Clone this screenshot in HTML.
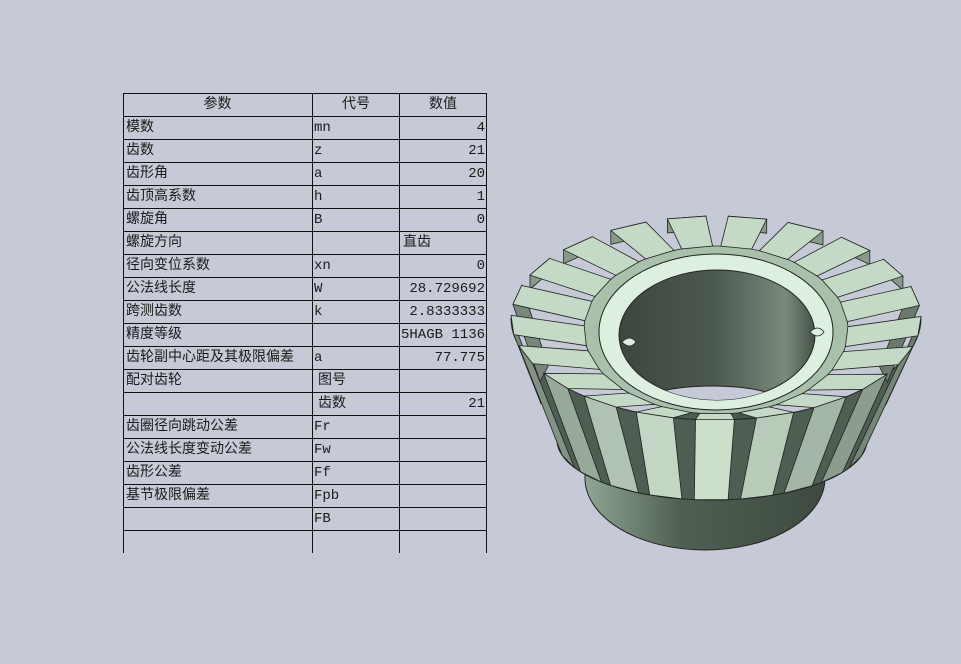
<!DOCTYPE html>
<html><head><meta charset="utf-8"><style>
html,body{margin:0;padding:0;}
body{width:961px;height:664px;background:#c6cad6;position:relative;overflow:hidden;font-family:"Liberation Mono","Noto Sans CJK SC",monospace;}
.t{position:absolute;left:123px;top:93px;width:364px;height:460px;}
.hl{position:absolute;left:0;width:364px;height:1px;background:#111;}
.vl{position:absolute;top:0;width:1px;height:460px;background:#111;}
.c{position:absolute;height:23px;line-height:24px;font-size:14px;color:#1a1a1a;white-space:nowrap;overflow:hidden;}
</style></head><body>
<div class="t" id="t"></div>
<svg id="g" width="961" height="664" style="position:absolute;left:0;top:0"></svg>
<script>
var t=document.getElementById('t');
var h='';
for(var i=0;i<=19;i++){h+='<div class="hl" style="top:'+(i*23)+'px"></div>';}
[0,189,276,363].forEach(function(x){h+='<div class="vl" style="left:'+x+'px"></div>';});
var rows=[["参数","代号","数值",1],["模数","mn","4"],["齿数","z","21"],["齿形角","a","20"],["齿顶高系数","h","1"],["螺旋角","B","0"],["螺旋方向","","直齿",2],["径向变位系数","xn","0"],["公法线长度","W","28.729692"],["跨测齿数","k","2.8333333"],["精度等级","","5HAGB 1136"],["齿轮副中心距及其极限偏差","a","77.775"],["配对齿轮","图号",""],["","齿数","21"],["齿圈径向跳动公差","Fr",""],["公法线长度变动公差","Fw",""],["齿形公差","Ff",""],["基节极限偏差","Fpb",""],["","FB",""]];
rows.forEach(function(r,i){var y=i*23;
 if(r[3]==1){h+='<div class="c" style="top:'+y+'px;left:0;width:189px;text-align:center">'+r[0]+'</div><div class="c" style="top:'+y+'px;left:190px;width:86px;text-align:center">'+r[1]+'</div><div class="c" style="top:'+y+'px;left:277px;width:86px;text-align:center">'+r[2]+'</div>';return;}
 h+='<div class="c" style="top:'+y+'px;left:3px;width:190px">'+r[0]+'</div>';
 h+='<div class="c" style="top:'+y+'px;left:191px;width:84px;padding-left:'+(r[1].length&&r[1].charCodeAt(0)>255?4:0)+'px">'+r[1]+'</div>';
 if(r[3]==2) h+='<div class="c" style="top:'+y+'px;left:280px;width:82px">'+r[2]+'</div>';
 else h+='<div class="c" style="top:'+y+'px;left:277px;width:85px;text-align:right">'+r[2]+'</div>';
});
t.innerHTML=h;

var s='';
function P(e,a){return [e[0]+e[2]*Math.cos(a),e[1]+e[3]*Math.sin(a)];}
function pts(a){return a.map(function(p){return p[0].toFixed(1)+','+p[1].toFixed(1)}).join(' ');}
function mix(k){var a=[60,74,64],b=[214,234,214];return 'rgb('+a.map(function(v,i){return Math.round(v+(b[i]-v)*k)}).join(',')+')';}
s+='<defs><linearGradient id="hub" x1="0" x2="1"><stop offset="0" stop-color="#8fa594"/><stop offset="0.4" stop-color="#4f5f52"/><stop offset="1" stop-color="#3e4a40"/></linearGradient>'+
'<linearGradient id="bore" x1="0" x2="1"><stop offset="0" stop-color="#3c463e"/><stop offset="0.5" stop-color="#4d5a50"/><stop offset="0.85" stop-color="#7a8a7c"/><stop offset="1" stop-color="#465248"/></linearGradient>'+
'<clipPath id="bc"><ellipse cx="717" cy="335" rx="98" ry="65"/></clipPath></defs>';
s+='<ellipse cx="705" cy="478" rx="120" ry="72" fill="url(#hub)" stroke="#222"/>';
var ER=[716,330,132,84], ET=[716,318,205,102], EB=[712,440,155,60];
var body=[];for(var k=0;k<=60;k++){body.push(P(ET,Math.PI*k/60));}
for(var k=60;k>=0;k--){body.push(P(EB,Math.PI*k/60));}
s+='<polygon points="'+pts(body)+'" fill="#4e5e52" stroke="#222"/>';
s+='<ellipse cx="'+ER[0]+'" cy="'+ER[1]+'" rx="'+ER[2]+'" ry="'+ER[3]+'" fill="#a9c0ab" stroke="#222" stroke-width="0.8"/>';
var n=21,teeth=[];
for(var i=0;i<n;i++){teeth.push(i*2*Math.PI/n+0.08);}
teeth.sort(function(a,b){return Math.sin(a)-Math.sin(b);});
teeth.forEach(function(a){var w=0.095;
 var t1=P(ET,a-w),t2=P(ET,a+w),r1=P(ER,a-w*1.25),r2=P(ER,a+w*1.25);
 var sn=Math.sin(a);
 if(sn>-0.25){var b1=P(EB,a-w*1.15),b2=P(EB,a+w*1.15);
   if(sn<=0.15){b1=[t1[0]+(b1[0]-t1[0])*0.6,t1[1]+Math.max(28,(b1[1]-t1[1])*0.6)];b2=[t2[0]+(b2[0]-t2[0])*0.6,t2[1]+Math.max(28,(b2[1]-t2[1])*0.6)];}
   var k=Math.max(0,sn);k=0.3+0.55*k*k+(Math.cos(a)<0?0.08:0);
   s+='<polygon points="'+pts([t1,t2,b2,b1])+'" fill="'+mix(k)+'" stroke="#222" stroke-width="0.8"/>';
 } else {
   s+='<polygon points="'+pts([t1,t2,[t2[0],t2[1]+14],[t1[0],t1[1]+14]])+'" fill="'+mix(0.5)+'" stroke="#222" stroke-width="0.8"/>';
 }
 s+='<polygon points="'+pts([r1,t1,t2,r2])+'" fill="#c4dac6" stroke="#222" stroke-width="0.8"/>';
});
s+='<ellipse cx="716" cy="332" rx="117" ry="78" fill="#ddf0df" stroke="#222"/>';
s+='<ellipse cx="717" cy="335" rx="98" ry="65" fill="url(#bore)" stroke="#222"/>';
s+='<ellipse cx="712" cy="410" rx="82" ry="24" fill="#c6cad6" stroke="#222" clip-path="url(#bc)"/>';
s+='<path d="M622 342 q8 -8 14 0 q-6 8 -14 0z M810 332 q8 -8 14 0 q-6 8 -14 0z" fill="#ddf0df" stroke="#222" stroke-width="0.8"/>';
document.getElementById('g').innerHTML=s;
</script>
</body></html>
